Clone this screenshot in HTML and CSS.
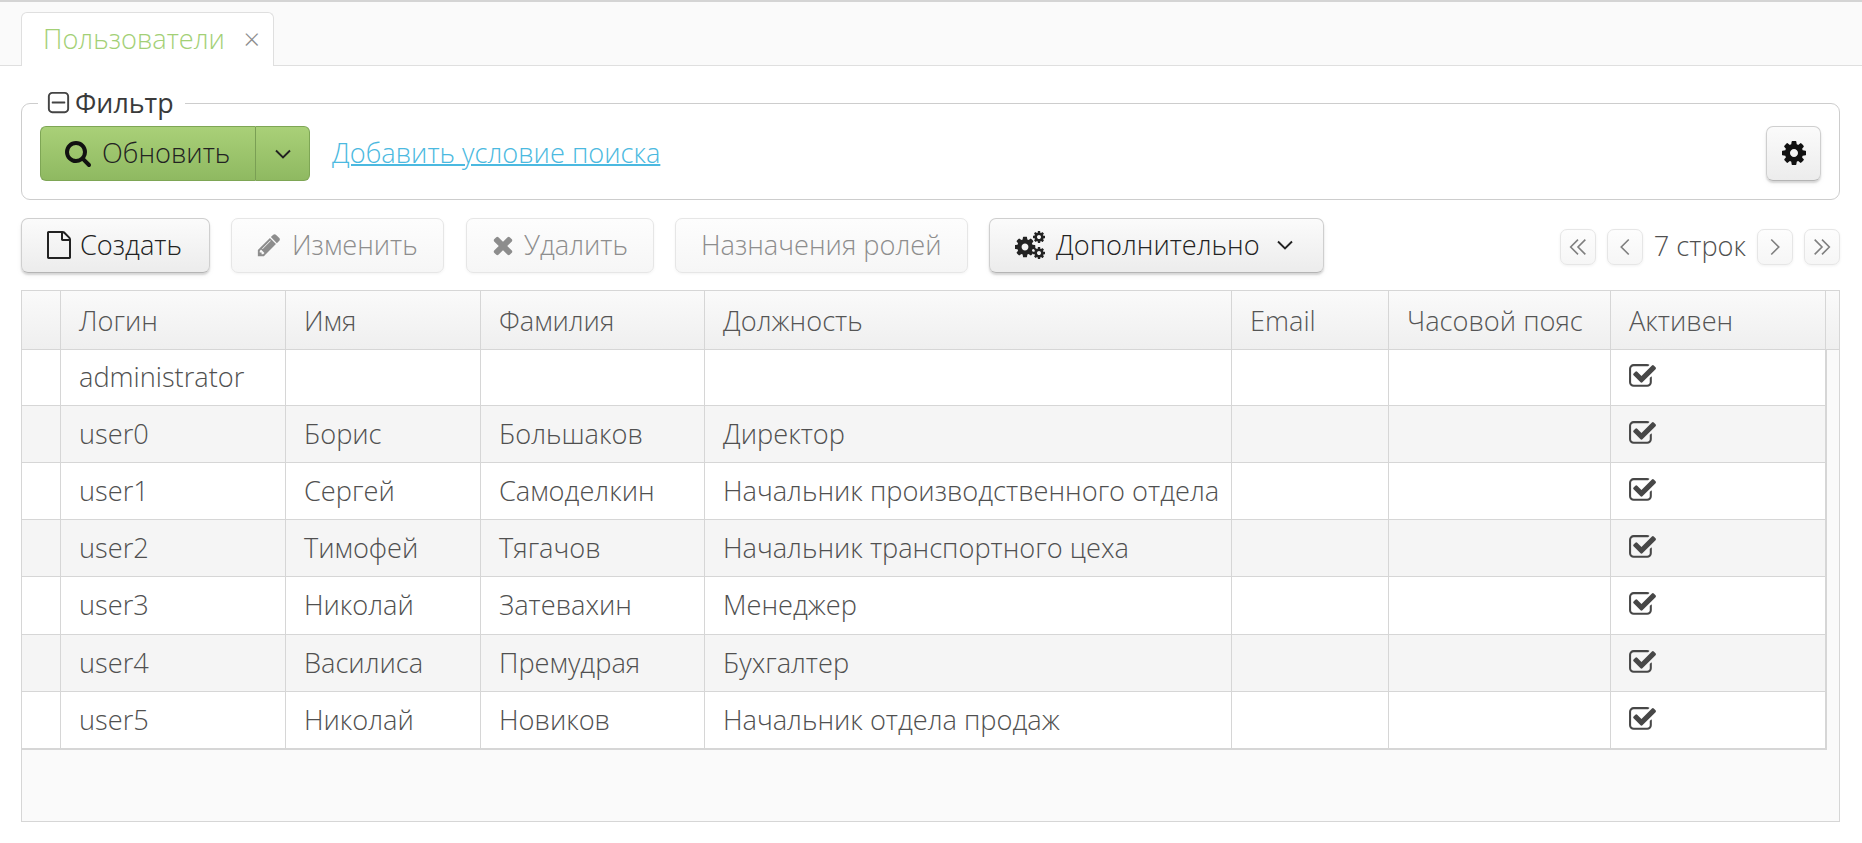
FILE: index.html
```html
<!DOCTYPE html>
<html lang="ru">
<head>
<meta charset="utf-8">
<title>Пользователи</title>
<link rel="stylesheet" href="styles.css">
</head>
<body>
<svg class="defs" xmlns="http://www.w3.org/2000/svg" aria-hidden="true">
  <symbol id="i-search" viewBox="0 0 1792 1792"><path d="M1216 832q0-185-131.500-316.500t-316.500-131.500-316.500 131.500-131.500 316.500 131.500 316.500 316.500 131.500 316.500-131.500 131.500-316.500zm512 832q0 52-38 90t-90 38q-54 0-90-38l-343-342q-179 124-399 124-143 0-273.500-55.500t-225-150-150-225-55.500-273.500 55.500-273.500 150-225 225-150 273.500-55.500 273.500 55.500 225 150 150 225 55.500 273.500q0 220-124 399l343 343q37 37 37 90z"/></symbol>
  <symbol id="i-check" viewBox="0 0 1792 1792"><path d="M1472 930v318q0 119-84.500 203.500t-203.500 84.500h-832q-119 0-203.500-84.500t-84.500-203.500v-832q0-119 84.500-203.500t203.500-84.500h832q63 0 117 25 15 7 18 23 3 17-9 29l-49 49q-10 10-23 10-3 0-9-2-23-6-45-6h-832q-66 0-113 47t-47 113v832q0 66 47 113t113 47h832q66 0 113-47t47-113v-254q0-13 9-22l64-64q10-10 23-10 6 0 12 3 20 8 20 29zm231-489l-814 814q-24 24-57 24t-57-24l-430-430q-24-24-24-57t24-57l110-110q24-24 57-24t57 24l263 263 647-647q24-24 57-24t57 24l110 110q24 24 24 57t-24 57z"/></symbol>
  <symbol id="i-cog" viewBox="0 0 1792 1792"><path d="M1152 896q0-106-75-181t-181-75-181 75-75 181 75 181 181 75 181-75 75-181zm512-109v222q0 12-8 23t-20 13l-185 28q-19 54-39 91 35 50 107 138 10 12 10 25t-9 23q-27 37-99 108t-94 71q-12 0-26-9l-138-108q-44 23-91 38-16 136-29 186-7 28-36 28h-222q-14 0-24.500-8.500t-11.500-21.500l-28-184q-49-16-90-37l-141 107q-10 9-25 9-14 0-25-11-126-114-165-168-7-10-7-23 0-12 8-23 15-21 51-66.500t54-70.500q-27-50-41-99l-183-27q-13-2-21-12.500t-8-23.500v-222q0-12 8-23t19-13l186-28q14-46 39-92-40-57-107-138-10-12-10-24 0-10 9-23 26-36 98.500-107.500t94.500-71.500q13 0 26 10l138 107q44-23 91-38 16-136 29-186 7-28 36-28h222q14 0 24.500 8.500t11.500 21.500l28 184q49 16 90 37l142-107q9-9 24-9 13 0 25 10 129 119 165 170 7 8 7 22 0 12-8 23-15 21-51 66.500t-54 70.500q26 50 41 98l183 28q13 2 21 12.500t8 23.500z"/></symbol>
  <symbol id="i-cogs" viewBox="0 0 30 28"><use href="#i-cog" x="-2" y="4" width="24" height="24"/><use href="#i-cog" x="17" y="-1" width="14" height="14"/><use href="#i-cog" x="17" y="15" width="14" height="14"/></symbol>
  <symbol id="i-pencil" viewBox="0 0 1792 1792"><path d="M491 1536l91-91-235-235-91 91v107h128v128h107zm523-928q0-22-22-22-10 0-17 7l-542 542q-7 7-7 17 0 22 22 22 10 0 17-7l542-542q7-7 7-17zm-54-192l416 416-832 832h-416v-416zm683 96q0 53-37 90l-166 166-416-416 166-165q36-38 90-38 53 0 91 38l235 234q37 39 37 91z"/></symbol>
  <symbol id="i-times" viewBox="0 0 1792 1792"><path d="M1490 1322q0 40-28 68l-136 136q-28 28-68 28t-68-28l-294-294-294 294q-28 28-68 28t-68-28l-136-136q-28-28-28-68t28-68l294-294-294-294q-28-28-28-68t28-68l136-136q28-28 68-28t68 28l294 294 294-294q28-28 68-28t68 28l136 136q28 28 28 68t-28 68l-294 294 294 294q28 28 28 68z"/></symbol>
  <symbol id="i-file" viewBox="0 0 1792 1792"><path d="M1596 380q28 28 48 76t20 88v1152q0 40-28 68t-68 28h-1344q-40 0-68-28t-28-68v-1600q0-40 28-68t68-28h896q40 0 88 20t76 48zm-444-244v376h376q-10-29-22-41l-313-313q-12-12-41-22zm384 1528v-1024h-416q-40 0-68-28t-28-68v-416h-768v1536h1280z"/></symbol>
  <symbol id="i-minus" viewBox="0 0 1792 1792"><path d="M1344 800v64q0 14-9 23t-23 9h-832q-14 0-23-9t-9-23v-64q0-14 9-23t23-9h832q14 0 23 9t9 23zm128 448v-832q0-66-47-113t-113-47h-832q-66 0-113 47t-47 113v832q0 66 47 113t113 47h832q66 0 113-47t47-113zm128-832v832q0 119-84.500 203.500t-203.500 84.500h-832q-119 0-203.500-84.500t-84.500-203.500v-832q0-119 84.500-203.500t203.500-84.500h832q119 0 203.500 84.500t84.500 203.500z"/></symbol>
  <symbol id="i-down" viewBox="0 0 16 16"><path d="M1 4.500l7 7 7-7" fill="none" stroke="currentColor" stroke-width="1.900"/></symbol>
  <symbol id="i-left" viewBox="0 0 16 16"><path d="M11 2l-6 6 6 6" fill="none" stroke="currentColor" stroke-width="1.300"/></symbol>
  <symbol id="i-right" viewBox="0 0 16 16"><path d="M5 2l6 6-6 6" fill="none" stroke="currentColor" stroke-width="1.300"/></symbol>
  <symbol id="i-first" viewBox="0 0 18 16"><path d="M9 2l-6 6 6 6M15 2l-6 6 6 6" fill="none" stroke="currentColor" stroke-width="1.300"/></symbol>
  <symbol id="i-last" viewBox="0 0 18 16"><path d="M3 2l6 6-6 6M9 2l6 6-6 6" fill="none" stroke="currentColor" stroke-width="1.300"/></symbol>
</svg>

<header class="tabbar">
  <div class="tab">
    <span class="tab-title">Пользователи</span>
    <span class="tab-close">×</span>
  </div>
</header>

<main class="content">
  <fieldset class="filter">
    <legend class="filter-legend">
      <svg class="ic ic-minus"><use href="#i-minus"/></svg>
      <span>Фильтр</span>
    </legend>
    <div class="filter-row">
      <div class="split">
        <button class="split-main"><svg class="ic ic-search"><use href="#i-search"/></svg>Обновить</button>
        <button class="split-arrow"><svg class="ic ic-down"><use href="#i-down"/></svg></button>
      </div>
      <a class="add-link" href="#">Добавить условие поиска</a>
      <button class="btn btn-gear"><svg class="ic ic-gear"><use href="#i-cog"/></svg></button>
    </div>
  </fieldset>

  <div class="toolbar">
    <button class="btn btn-create"><svg class="ic ic-file"><use href="#i-file"/></svg>Создать</button>
    <button class="btn btn-off btn-edit"><svg class="ic ic-pencil"><use href="#i-pencil"/></svg>Изменить</button>
    <button class="btn btn-off btn-del"><svg class="ic ic-times"><use href="#i-times"/></svg>Удалить</button>
    <button class="btn btn-off btn-roles">Назначения ролей</button>
    <button class="btn btn-more"><svg class="ic ic-cogs"><use href="#i-cogs"/></svg>Дополнительно<svg class="ic ic-down ic-more"><use href="#i-down"/></svg></button>
    <div class="pager">
      <button class="page-btn"><svg class="ic ic-dbl"><use href="#i-first"/></svg></button>
      <button class="page-btn"><svg class="ic ic-sgl"><use href="#i-left"/></svg></button>
      <span class="page-label">7 строк</span>
      <button class="page-btn"><svg class="ic ic-sgl"><use href="#i-right"/></svg></button>
      <button class="page-btn"><svg class="ic ic-dbl"><use href="#i-last"/></svg></button>
    </div>
  </div>

  <section class="grid">
    <table class="data">
      <colgroup>
        <col class="c-sel"><col class="c-login"><col class="c-name"><col class="c-last"><col class="c-pos"><col class="c-mail"><col class="c-tz"><col class="c-act"><col class="c-gut">
      </colgroup>
      <thead>
        <tr><th></th><th>Логин</th><th>Имя</th><th>Фамилия</th><th>Должность</th><th>Email</th><th>Часовой пояс</th><th>Активен</th><th></th></tr>
      </thead>
      <tbody>
        <tr><td></td><td>administrator</td><td></td><td></td><td></td><td></td><td></td><td><svg class="ic ic-check"><use href="#i-check"/></svg></td><td class="gut"></td></tr>
        <tr><td></td><td>user0</td><td>Борис</td><td>Большаков</td><td>Директор</td><td></td><td></td><td><svg class="ic ic-check"><use href="#i-check"/></svg></td><td class="gut"></td></tr>
        <tr><td></td><td>user1</td><td>Сергей</td><td>Самоделкин</td><td>Начальник производственного отдела</td><td></td><td></td><td><svg class="ic ic-check"><use href="#i-check"/></svg></td><td class="gut"></td></tr>
        <tr><td></td><td>user2</td><td>Тимофей</td><td>Тягачов</td><td>Начальник транспортного цеха</td><td></td><td></td><td><svg class="ic ic-check"><use href="#i-check"/></svg></td><td class="gut"></td></tr>
        <tr><td></td><td>user3</td><td>Николай</td><td>Затевахин</td><td>Менеджер</td><td></td><td></td><td><svg class="ic ic-check"><use href="#i-check"/></svg></td><td class="gut"></td></tr>
        <tr><td></td><td>user4</td><td>Василиса</td><td>Премудрая</td><td>Бухгалтер</td><td></td><td></td><td><svg class="ic ic-check"><use href="#i-check"/></svg></td><td class="gut"></td></tr>
        <tr><td></td><td>user5</td><td>Николай</td><td>Новиков</td><td>Начальник отдела продаж</td><td></td><td></td><td><svg class="ic ic-check"><use href="#i-check"/></svg></td><td class="gut"></td></tr>
      </tbody>
    </table>
  </section>
</main>
</body>
</html>
```
FILE: styles.css
```css
* { box-sizing: border-box; }

html, body { height: 100%; }

body {
  margin: 0;
  background: #fff;
  color: #505050;
  font-family: "Open Sans", "Liberation Sans", sans-serif;
  font-weight: 300;
  font-size: 27.2px;
  overflow: hidden;
}

button { font: inherit; cursor: pointer; }

.defs { position: absolute; width: 0; height: 0; }

.ic { fill: currentColor; flex: none; }

/* Tabs */
.tabbar {
  height: 66px;
  padding: 10px 0 0 21px;
  background: #fafafa;
  border-top: 2px solid #d4d4d4;
  border-bottom: 1px solid #dfdfdf;
  display: flex;
  align-items: flex-start;
}

.tab {
  width: 253px;
  height: 54px;
  margin-bottom: -1px;
  padding: 0 13px 2px 21px;
  display: flex;
  align-items: center;
  justify-content: space-between;
  background: #fff;
  border: 1px solid #dfdfdf;
  border-bottom: 0;
  border-radius: 6px 6px 0 0;
}

.tab-title { color: #a3d076; }

.tab-close { color: #8d8d8d; font-size: 29px; line-height: 1; }

/* Filter */
.content { padding: 19px 22px 0 21px; }

.filter {
  margin: 0;
  padding: 0 18px 17px 18px;
  min-width: 0;
  height: 115px;
  border: 1px solid #cdcdcd;
  border-radius: 9px;
}

.filter-legend {
  margin-left: -2px;
  padding: 0 11px 2px 7px;
  height: 36px;
  display: flex;
  align-items: center;
  gap: 3px;
  color: #3a3a3a;
  font-size: 26.8px;
  font-weight: 400;
}

.ic-minus { width: 27px; height: 27px; margin-top: 2px; color: #444; }

.filter-row {
  display: flex;
  align-items: center;
  height: 55px;
  margin-top: 5px;
}

.split { display: flex; height: 55px; }

.split-main,
.split-arrow {
  display: flex;
  align-items: center;
  color: #222;
  background: linear-gradient(#a9d078, #8fb961);
  border: 1px solid #7ea655;
}

.split-main {
  width: 215px;
  padding: 0 0 2px 23px;
  gap: 10px;
  border-radius: 6px 0 0 6px;
  border-right: 0;
  font-weight: 300;
}

.split-arrow {
  width: 55px;
  justify-content: center;
  border-radius: 0 6px 6px 0;
  border-left: 1px solid #7a9f54;
}

.ic-search { width: 28px; height: 28px; color: #111; }

.ic-down { width: 16px; height: 16px; color: #222; }

.add-link {
  margin-left: 22px;
  padding-bottom: 3px;
  color: #4bb9e0;
  text-decoration-thickness: 2px;
}

.btn {
  height: 55px;
  padding: 0 0 2px;
  display: flex;
  align-items: center;
  color: #222;
  background: linear-gradient(#fbfbfb, #ececec);
  border: 1px solid #cfcfcf;
  border-bottom-color: #b4b4b4;
  border-radius: 7px;
  box-shadow: 0 2px 2px rgba(0, 0, 0, .14), 0 3px 6px rgba(0, 0, 0, .04);
  font-weight: 300;
  white-space: nowrap;
}

.btn-gear {
  width: 55px;
  margin-left: auto;
  justify-content: center;
}

.ic-gear { width: 28px; height: 28px; color: #111; }

/* Toolbar */
.toolbar {
  margin-top: 18px;
  display: flex;
  align-items: flex-start;
  height: 72px;
}

.btn-off {
  color: #8d8d8d;
  background: linear-gradient(#fdfdfd, #f6f6f6);
  border-color: #e6e6e6;
  box-shadow: 0 1px 3px rgba(0, 0, 0, .05);
}

.btn-create { width: 189px; padding-left: 23px; gap: 7px; }
.btn-edit { width: 213px; margin-left: 21px; padding-left: 24px; gap: 10px; }
.btn-del { width: 188px; margin-left: 22px; padding-left: 22px; gap: 7px; }
.btn-roles { width: 293px; margin-left: 21px; padding-left: 25px; }
.btn-more { width: 335px; margin-left: 21px; padding-left: 25px; gap: 11px; }

.ic-file { width: 28px; height: 28px; color: #222; }
.ic-pencil { width: 26px; height: 26px; color: #8d8d8d; }
.ic-times { width: 28px; height: 28px; color: #8d8d8d; }
.ic-cogs { width: 30px; height: 28px; color: #222; }
.ic-more { margin-left: 6px; }

.pager {
  margin-left: auto;
  margin-top: 9px;
  display: flex;
  align-items: center;
  gap: 11px;
}

.page-btn {
  width: 36px;
  height: 36px;
  padding: 0;
  display: flex;
  align-items: center;
  justify-content: center;
  color: #7f7f7f;
  background: linear-gradient(#fdfdfd, #f6f6f6);
  border: 1px solid #e6e6e6;
  border-radius: 7px;
  box-shadow: 0 1px 3px rgba(0, 0, 0, .06);
}

.page-label { padding-bottom: 2px; }

.ic-dbl { width: 22px; height: 20px; }
.ic-sgl { width: 20px; height: 20px; }

/* Grid */
.grid {
  height: 532px;
  background: #fafafa;
  border: 1px solid #d6d6d6;
}

.data {
  table-layout: fixed;
  width: 100%;
  border-collapse: separate;
  border-spacing: 0;
}

.c-sel { width: 39px; }
.c-login { width: 225px; }
.c-name { width: 195px; }
.c-last { width: 224px; }
.c-pos { width: 527px; }
.c-mail { width: 157px; }
.c-tz { width: 222px; }
.c-act { width: 215px; }
.c-gut { width: auto; }

.data th,
.data td {
  padding: 0 0 2px 18px;
  font-weight: 300;
  text-align: left;
  white-space: nowrap;
  overflow: hidden;
  border-right: 1px solid #d6d6d6;
  border-bottom: 1px solid #d6d6d6;
}

.data th {
  height: 59px;
  padding-bottom: 0;
  color: #555;
  background: linear-gradient(#fafafa, #efefef);
}

.data th:last-child { border-right: 0; }

.data td {
  height: 57px;
  background: #fff;
}

.data tbody tr:first-child td { height: 56px; }
.data tbody tr:nth-child(5) td { height: 58px; }

.data tbody tr:nth-child(even) td { background: #f5f5f5; }

.data .gut,
.data tbody tr:nth-child(even) .gut {
  background: transparent;
  border: 0;
  border-left: 1px solid #d6d6d6;
}

.data tbody tr:last-child td { height: 58px; border-bottom-width: 2px; }
.data tbody tr:last-child .gut { border-bottom: 0; }

.ic-check { display: block; width: 29px; height: 29px; margin-left: -1px; color: #474747; }
```
